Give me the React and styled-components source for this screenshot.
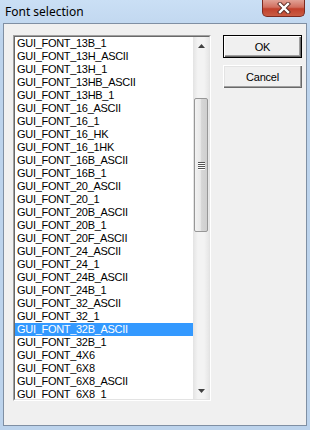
import React from "react";
import styled, { createGlobalStyle } from "styled-components";

const GlobalStyle = createGlobalStyle`
  html, body {
    margin: 0;
    padding: 0;
    background: #c1d8f0;
  }
`;

const Window = styled.div`
  width: 310px;
  height: 430px;
  display: flex;
  flex-direction: column;
  background: linear-gradient(#cadff5, #bcd3ec 40px, #bcd3ec);
  box-sizing: border-box;
  position: relative;
`;

const TitleBar = styled.div`
  height: 23px;
  flex: none;
  display: flex;
  align-items: center;
  padding-left: 5px;
  font-family: "Noto Sans", "DejaVu Sans", sans-serif;
  font-size: 12px;
  color: #000;
`;

const CloseButton = styled.div`
  position: absolute;
  top: 0;
  right: 5px;
  width: 43px;
  height: 17px;
  box-sizing: border-box;
  border: 1px solid #7c2a20;
  border-top: none;
  border-radius: 0 0 5px 5px;
  background: linear-gradient(#e1a195, #d16f5f 45%, #c1402c 55%, #c95c43);
  display: flex;
  align-items: center;
  justify-content: center;
`;

const Client = styled.div`
  flex: 1;
  margin: 0 3px 4px 3px;
  border: 1px solid #7f8fa3;
  background: #f0f0f0;
  display: flex;
  align-items: flex-start;
  padding: 11px 4px 0 9px;
`;

const ListBox = styled.div`
  width: 198px;
  height: 366px;
  box-sizing: border-box;
  border-top: 1px solid #a0a0a0;
  border-left: 1px solid #a0a0a0;
  border-right: 1px solid #ffffff;
  border-bottom: 1px solid #ffffff;
  display: flex;
  flex: none;
`;

const ListInner = styled.div`
  flex: 1;
  display: flex;
  border-top: 1px solid #696969;
  border-left: 1px solid #696969;
  border-right: 1px solid #e3e3e3;
  border-bottom: 1px solid #e3e3e3;
  background: #fff;
  overflow: hidden;
`;

const Items = styled.div`
  flex: 1;
  display: flex;
  flex-direction: column;
`;

const Item = styled.div`
  height: 13px;
  line-height: 13px;
  padding-left: 2px;
  font-family: "Liberation Sans", Arial, sans-serif;
  font-size: 11px;
  letter-spacing: -0.3px;
  white-space: nowrap;
  color: ${(p) => (p.selected ? "#fff" : "#000")};
  background: ${(p) => (p.selected ? "#3399ff" : "transparent")};
`;

const ScrollBar = styled.div`
  width: 16px;
  flex: none;
  display: flex;
  flex-direction: column;
  background: linear-gradient(90deg, #e3e3e3, #f3f3f3 30%, #f3f3f3 70%, #e6e6e6);
`;

const ArrowBox = styled.div`
  height: 17px;
  flex: none;
  display: flex;
  align-items: center;
  justify-content: center;
`;

const Track = styled.div`
  flex: 1;
  display: flex;
  flex-direction: column;
  padding-top: 44px;
`;

const Thumb = styled.div`
  height: 134px;
  margin: 0 1px;
  box-sizing: border-box;
  border: 1px solid #979797;
  border-radius: 2px;
  background: linear-gradient(90deg, #f2f2f2, #e8e8e8 45%, #d6d6d6 55%, #cfcfcf);
  display: flex;
  align-items: center;
  justify-content: center;
`;

const Grip = styled.div`
  width: 7px;
  display: flex;
  flex-direction: column;
  gap: 1px;
`;

const GripLine = styled.div`
  height: 1px;
  background: #555;
  box-shadow: 0 1px 0 #fff;
`;

const Buttons = styled.div`
  display: flex;
  flex-direction: column;
  gap: 7px;
  margin-left: 12px;
  width: 79px;
`;

const Button = styled.div`
  height: 23px;
  box-sizing: border-box;
  display: flex;
  align-items: center;
  justify-content: center;
  font-family: "Liberation Sans", Arial, sans-serif;
  font-size: 11px;
  letter-spacing: -0.2px;
  color: #000;
  background: #f0f0f0;
  border: 1px solid ${(p) => (p.primary ? "#000" : "transparent")};
  box-shadow: ${(p) =>
    p.primary
      ? "inset 1px 1px 0 #fff, inset -1px -1px 0 #696969, inset -2px -2px 0 #a0a0a0"
      : "inset 1px 1px 0 #fff, inset -1px -1px 0 #696969, inset -2px -2px 0 #a0a0a0"};
  ${(p) =>
    !p.primary &&
    `border: none; box-shadow: inset 1px 1px 0 #fff, inset -1px -1px 0 #696969, inset -2px -2px 0 #a0a0a0, inset 2px 2px 0 #e3e3e3;`}
`;

const fonts = [
  "GUI_FONT_13B_1",
  "GUI_FONT_13H_ASCII",
  "GUI_FONT_13H_1",
  "GUI_FONT_13HB_ASCII",
  "GUI_FONT_13HB_1",
  "GUI_FONT_16_ASCII",
  "GUI_FONT_16_1",
  "GUI_FONT_16_HK",
  "GUI_FONT_16_1HK",
  "GUI_FONT_16B_ASCII",
  "GUI_FONT_16B_1",
  "GUI_FONT_20_ASCII",
  "GUI_FONT_20_1",
  "GUI_FONT_20B_ASCII",
  "GUI_FONT_20B_1",
  "GUI_FONT_20F_ASCII",
  "GUI_FONT_24_ASCII",
  "GUI_FONT_24_1",
  "GUI_FONT_24B_ASCII",
  "GUI_FONT_24B_1",
  "GUI_FONT_32_ASCII",
  "GUI_FONT_32_1",
  "GUI_FONT_32B_ASCII",
  "GUI_FONT_32B_1",
  "GUI_FONT_4X6",
  "GUI_FONT_6X8",
  "GUI_FONT_6X8_ASCII",
  "GUI_FONT_6X8_1",
];

const CloseIcon = () => (
  <svg width="14" height="12" viewBox="0 0 14 12">
    <path d="M3 2 L11 10 M11 2 L3 10" stroke="#5a2a24" strokeWidth="4.2" strokeLinecap="square" />
    <path d="M3 2 L11 10 M11 2 L3 10" stroke="#fff" strokeWidth="2.4" strokeLinecap="square" />
  </svg>
);

const Arrow = ({ down }) => (
  <svg width="7" height="4" viewBox="0 0 7 4">
    <path d={down ? "M0 0 H7 L3.5 4 Z" : "M0 4 H7 L3.5 0 Z"} fill="#404040" />
  </svg>
);

export default function App() {
  return (
    <Window>
      <GlobalStyle />
      <TitleBar>Font selection</TitleBar>
      <CloseButton>
        <CloseIcon />
      </CloseButton>
      <Client>
        <ListBox>
          <ListInner>
            <Items>
              {fonts.map((f) => (
                <Item key={f} selected={f === "GUI_FONT_32B_ASCII"}>
                  {f}
                </Item>
              ))}
            </Items>
            <ScrollBar>
              <ArrowBox>
                <Arrow />
              </ArrowBox>
              <Track>
                <Thumb>
                  <Grip>
                    <GripLine />
                    <GripLine />
                    <GripLine />
                    <GripLine />
                  </Grip>
                </Thumb>
              </Track>
              <ArrowBox>
                <Arrow down />
              </ArrowBox>
            </ScrollBar>
          </ListInner>
        </ListBox>
        <Buttons>
          <Button primary>OK</Button>
          <Button>Cancel</Button>
        </Buttons>
      </Client>
    </Window>
  );
}
